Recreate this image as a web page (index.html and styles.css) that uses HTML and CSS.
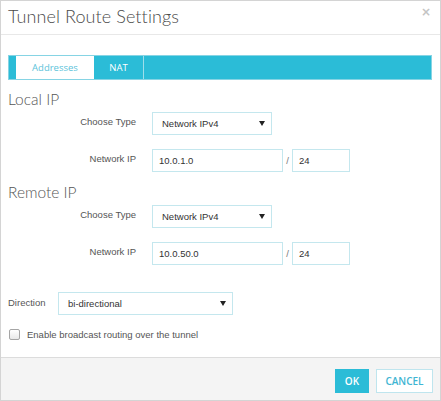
FILE: index.html
```html
<!DOCTYPE html>
<html>
<head>
<meta charset="utf-8">
<link rel="stylesheet" href="styles.css">
</head>
<body>
<div class="dialog">
  <div class="header">
    <div class="title">Tunnel Route Settings</div>
    <div class="close">&#215;</div>
  </div>
  <div class="content">
    <div class="tabs">
      <div class="tab active">Addresses</div>
      <div class="tab">NAT</div>
    </div>
    <div class="section">Local IP</div>
    <div class="row first">
      <div class="label">Choose Type</div>
      <div class="select type"><span>Network IPv4</span><span class="arrow"></span></div>
    </div>
    <div class="row">
      <div class="label">Network IP</div>
      <div class="input ip">10.0.1.0</div>
      <div class="slash">/</div>
      <div class="input mask">24</div>
    </div>
    <div class="section remote">Remote IP</div>
    <div class="row first">
      <div class="label">Choose Type</div>
      <div class="select type"><span>Network IPv4</span><span class="arrow"></span></div>
    </div>
    <div class="row">
      <div class="label">Network IP</div>
      <div class="input ip">10.0.50.0</div>
      <div class="slash">/</div>
      <div class="input mask">24</div>
    </div>
    <div class="direction">
      <div class="dlabel">Direction</div>
      <div class="select dir"><span>bi-directional</span><span class="arrow"></span></div>
    </div>
    <div class="check">
      <span class="box"></span>
      <span>Enable broadcast routing over the tunnel</span>
    </div>
  </div>
  <div class="footer">
    <div class="btn ok">OK</div>
    <div class="btn cancel">CANCEL</div>
  </div>
</div>
</body>
</html>
```
FILE: styles.css
```css
html, body {
  margin: 0;
  padding: 0;
  background: #fff;
}
.dialog {
  width: 441px;
  height: 401px;
  box-sizing: border-box;
  border: 1px solid #d4d4d4;
  display: flex;
  flex-direction: column;
  font-family: "Liberation Sans", Arial, sans-serif;
  font-size: 9.5px;
  color: #444;
}
.header {
  height: 34px;
  box-sizing: border-box;
  border-bottom: 1px solid #e8e8e8;
  display: flex;
  justify-content: space-between;
  align-items: flex-start;
  padding: 0 9px 0 7px;
}
.title {
  font-family: Lato, "Open Sans", sans-serif;
  font-weight: 300;
  font-size: 18px;
  line-height: 30px;
  color: #4a4a4a;
  letter-spacing: 0.1px;
}
.close {
  font-family: "DejaVu Sans", sans-serif;
  font-size: 12px;
  font-weight: bold;
  color: #c4c4c4;
  line-height: 22px;
}
.content {
  flex: 1;
  padding: 0 8px 0 7px;
}
.tabs {
  margin-top: 20px;
  height: 25px;
  box-sizing: border-box;
  background: #2bbcd7;
  border: 1px solid #86d4e4;
  padding-left: 7px;
  display: flex;
}
.tab {
  width: 50px;
  box-sizing: border-box;
  color: #fff;
  font-family: "Open Sans", sans-serif;
  font-size: 9.5px;
  line-height: 23px;
  text-align: center;
  border-right: 1px solid #9fdeea;
}
.tab.active {
  width: 78px;
  background: #fff;
  color: #5cc3da;
  border-right: none;
}
.section {
  margin-top: 9px;
  height: 20px;
  line-height: 20px;
  font-family: Lato, "Open Sans", sans-serif;
  font-size: 15.5px;
  font-weight: 300;
  color: #555;
}
.section.remote {
  margin-top: 10px;
}
.row {
  display: flex;
  align-items: center;
  margin-top: 14px;
  height: 23px;
}
.row.first {
  margin-top: 3px;
}
.label {
  width: 128px;
  text-align: right;
  margin-right: 16px;
  color: #555;
  font-size: 9.5px;
  position: relative;
  top: -2px;
}
.select, .input {
  height: 23px;
  box-sizing: border-box;
  border: 1px solid #c4e7ee;
  color: #333;
  font-size: 9.5px;
  display: flex;
  align-items: center;
}
.select {
  justify-content: space-between;
  padding: 0 6px 0 9px;
}
.select.type {
  width: 120px;
}
.select.dir {
  width: 175px;
}
.arrow {
  width: 0;
  height: 0;
  border-left: 3px solid transparent;
  border-right: 3px solid transparent;
  border-top: 5px solid #222;
}
.input {
  padding-left: 6px;
}
.input.ip {
  width: 131px;
}
.input.mask {
  width: 58px;
}
.slash {
  width: 9px;
  text-align: center;
  color: #777;
  font-size: 9.5px;
}
.direction {
  display: flex;
  align-items: center;
  margin-top: 27px;
  height: 23px;
}
.dlabel {
  width: 50px;
  color: #555;
  position: relative;
  top: -1px;
}
.check {
  margin-top: 9px;
  height: 20px;
  display: flex;
  align-items: center;
  color: #555;
}
.box {
  width: 9px;
  height: 9px;
  border: 1px solid #a5a5a5;
  border-radius: 2px;
  background: linear-gradient(#fff, #e8e8e8);
  margin: 0 7px 0 1px;
}
.footer {
  height: 43px;
  box-sizing: border-box;
  border-top: 1px solid #dcdcdc;
  background: #f4f4f4;
  display: flex;
  justify-content: flex-end;
  align-items: flex-start;
  padding: 11px 7px 0 0;
  gap: 7px;
}
.btn {
  height: 24px;
  box-sizing: border-box;
  font-family: "Open Sans", sans-serif;
  font-weight: 600;
  font-size: 10px;
  display: flex;
  align-items: center;
  justify-content: center;
}
.btn.ok {
  width: 34px;
  background: #2bbcd7;
  color: #fff;
}
.btn.cancel {
  width: 57px;
  background: #fff;
  border: 1px solid #bfe5ee;
  color: #3fb5d3;
}
```
